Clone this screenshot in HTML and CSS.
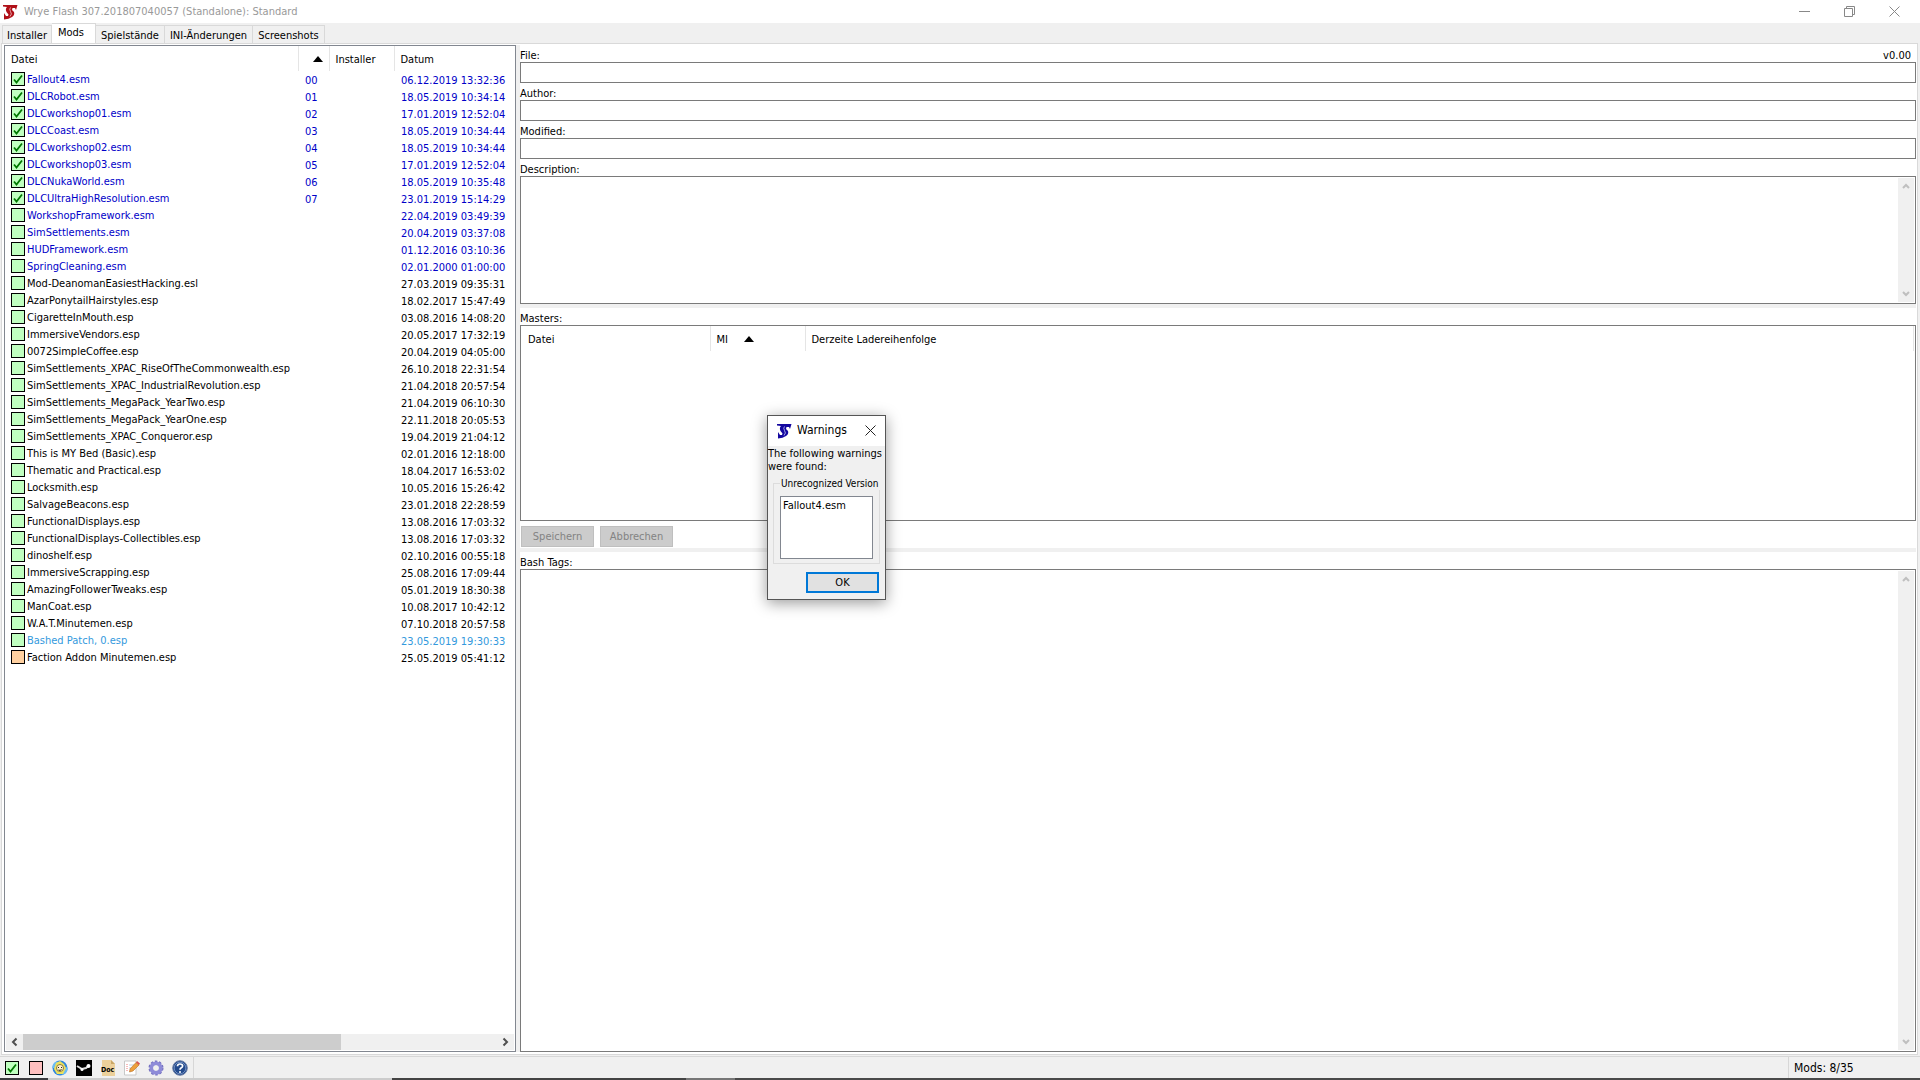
FILE: index.html
```html
<!DOCTYPE html>
<html lang="de">
<head>
  <meta charset="UTF-8" />
  <meta name="viewport" content="width=device-width, initial-scale=1.0"/>
  <title>Wrye Flash</title>
  <link rel="stylesheet" href="styles.css">
</head>
<body>
  <header class="titlebar">
    <svg class="logo" viewBox="0 0 15 16" width="15" height="16">
      <path fill="#b01018" d="M0 1 H14.500 L13 6 L12 4 L9.500 4 L9 6 L11 8 Q12 11 9 13 Q6 15 1 15.500 L1 9 L3 12 H5 L5.500 10.500 L3.500 8 Q2 5 4 3 L0 2.500 Z"/>
      <path fill="none" stroke="#f3c9c9" stroke-width=".8" d="M7.500 3.500 Q6 5 7.500 7.500 Q9.500 10 7 12.500"/>
    </svg>
    <h1>Wrye Flash 307.201807040057 (Standalone): Standard</h1>
    <div class="window-buttons">
      <button type="button" aria-label="Minimieren"><svg viewBox="0 0 11 11" width="11" height="11"><path d="M0 5.500 H11"/></svg></button>
      <button type="button" aria-label="Wiederherstellen"><svg viewBox="0 0 11 11" width="11" height="11"><path d="M.5 2.500 H8.500 V10.500 H.5 Z M2.500 2.500 V.5 H10.500 V8.500 H8.500"/></svg></button>
      <button type="button" aria-label="Schließen"><svg viewBox="0 0 11 11" width="11" height="11"><path d="M.5 .5 L10.500 10.500 M10.500 .5 L.5 10.500"/></svg></button>
    </div>
  </header>

  <nav class="tabs">
    <button type="button">Installer</button>
    <button type="button" class="active">Mods</button>
    <button type="button">Spielstände</button>
    <button type="button">INI-Änderungen</button>
    <button type="button">Screenshots</button>
  </nav>

  <main class="page">
    <section class="mod-list">
      <table class="mods">
        <thead>
          <tr>
            <th class="col-file">Datei</th>
            <th class="col-index" aria-label="Ladereihenfolge"><span class="sort"></span></th>
            <th class="col-installer">Installer</th>
            <th class="col-date">Datum</th>
          </tr>
        </thead>
        <tbody id="mods"></tbody>
      </table>
      <div class="hscroll">
        <svg viewBox="0 0 17 16" width="17" height="16"><path d="M10.500 4.500 L7 8 L10.500 11.500"/></svg>
        <div class="track"><div class="thumb"></div></div>
        <svg viewBox="0 0 17 16" width="17" height="16"><path d="M6.500 4.500 L10 8 L6.500 11.500"/></svg>
      </div>
    </section>

    <section class="details">
      <div class="label-row"><label for="file">File:</label><span>v0.00</span></div>
      <input type="text" id="file" />
      <label for="author">Author:</label>
      <input type="text" id="author" />
      <label for="modified">Modified:</label>
      <input type="text" id="modified" />
      <label for="description">Description:</label>
      <div class="box description">
        <textarea id="description"></textarea>
        <div class="vscroll">
          <svg viewBox="0 0 16 17" width="16" height="17"><path d="M5 10 L8 7 L11 10"/></svg>
          <svg viewBox="0 0 16 17" width="16" height="17"><path d="M5 7 L8 10 L11 7"/></svg>
        </div>
      </div>
      <div class="sash"></div>

      <h2>Masters:</h2>
      <div class="box masters">
        <table>
          <thead>
            <tr>
              <th class="col-master">Datei</th>
              <th class="col-mi">MI<span class="sort"></span></th>
              <th>Derzeite Ladereihenfolge</th>
            </tr>
          </thead>
        </table>
      </div>
      <div class="actions">
        <button type="button" disabled>Speichern</button>
        <button type="button" disabled>Abbrechen</button>
      </div>
      <div class="sash"></div>

      <label for="tags">Bash Tags:</label>
      <div class="box tags">
        <textarea id="tags"></textarea>
        <div class="vscroll">
          <svg viewBox="0 0 16 17" width="16" height="17"><path d="M5 10 L8 7 L11 10"/></svg>
          <svg viewBox="0 0 16 17" width="16" height="17"><path d="M5 7 L8 10 L11 7"/></svg>
        </div>
      </div>
    </section>
  </main>

  <footer class="statusbar">
    <div class="tools">
      <button type="button" aria-label="Auto-Quit">
        <svg viewBox="0 0 16 16" width="16" height="16"><rect x="1.500" y="1.500" width="13" height="13" fill="#c0ffc0" stroke="#000"/><path d="M4 8.500 L6.500 11.500 L12 4.500" fill="none" stroke="#007800" stroke-width="1.800"/></svg>
      </button>
      <button type="button" aria-label="OBSE">
        <svg viewBox="0 0 16 16" width="16" height="16"><rect x="1.500" y="1.500" width="13" height="13" fill="#ffc0c0" stroke="#000"/></svg>
      </button>
      <button type="button" aria-label="Fallout 4">
        <svg viewBox="0 0 16 16" width="16" height="16"><circle cx="8" cy="8" r="7.500" fill="#2f86dc"/><path d="M0 8 A8 8 0 0 1 5 1 L7 4 L3 8 Z M16 8 A8 8 0 0 1 11 15 L9 13 L14 7 Z" fill="#6cbcf4"/><path d="M8 1 L12 4 L14 8 L11 14 H5 L2 9 L4 3 Z" fill="#ece05c"/><circle cx="8" cy="8" r="3.500" fill="#fff3cc" stroke="#6b5a2a" stroke-width=".8"/><path d="M6.500 7 V8 M9.500 7 V8 M6.500 10 Q8 11 9.500 9.500" stroke="#222" fill="none"/></svg>
      </button>
      <button type="button" aria-label="Steam">
        <svg viewBox="0 0 16 16" width="16" height="16"><rect width="16" height="16" fill="#000"/><path d="M1 6 L6 9 L10 8 L13 5.500" fill="none" stroke="#ddd" stroke-width="2"/><circle cx="12.500" cy="6" r="2" fill="#fff"/><circle cx="6" cy="9.500" r="1.500" fill="#fff"/></svg>
      </button>
      <button type="button" aria-label="Doc Browser">
        <svg viewBox="0 0 16 16" width="16" height="16"><path d="M2 0 H11 L15 4 V16 H2 Z" fill="#ecd09a"/><path d="M11 0 V4 H15 Z" fill="#c9a766"/><text x="1" y="12" class="doc-text">Doc</text></svg>
      </button>
      <button type="button" aria-label="Mod Checker">
        <svg viewBox="0 0 16 16" width="16" height="16"><path d="M.5 1 H12 V15 H.5 Z" fill="#fff" stroke="#c8c8c8"/><path d="M3 4 V12" stroke="#e77" stroke-dasharray="1 1"/><path d="M5 5 H10 M5 8 H8" stroke="#bcd"/><path d="M6 9 L12 2.500 L15 5 L9 11 L5.500 12 Z" fill="#eda03c" stroke="#b86d22" stroke-width=".6"/><path d="M12 2.500 L13 1 L16 3.500 L15 5 Z" fill="#d9544d"/></svg>
      </button>
      <button type="button" aria-label="Einstellungen">
        <svg viewBox="0 0 16 16" width="16" height="16"><circle cx="8" cy="8" r="6.500" fill="none" stroke="#7470c0" stroke-width="2" stroke-dasharray="2.500 1.600"/><circle cx="8" cy="8" r="4.700" fill="none" stroke="#8e8bd8" stroke-width="3.800"/><circle cx="8" cy="8" r="2.500" fill="#f0f0f0"/></svg>
      </button>
      <button type="button" aria-label="Hilfe">
        <svg viewBox="0 0 16 16" width="16" height="16"><circle cx="8" cy="8" r="7.300" fill="#234a8c" stroke="#6b7ea4"/><circle cx="8" cy="8" r="5.800" fill="none" stroke="#8fa9d6" stroke-width=".7"/><path d="M5.500 6.300 Q5.500 4 8 4 Q10.600 4 10.600 6 Q10.600 7.200 9 8 Q8 8.600 8 9.800" fill="none" stroke="#fff" stroke-width="1.700"/><circle cx="8" cy="12" r="1" fill="#fff"/></svg>
      </button>
    </div>
    <div class="count">Mods: 8/35</div>
  </footer>
  <div class="taskbar"></div>

  <div class="dialog" role="dialog" aria-labelledby="dialog-title">
    <div class="dialog-title">
      <svg class="logo" viewBox="0 0 15 16" width="15" height="16">
        <path fill="#1408a0" d="M0 1 H14.500 L13 6 L12 4 L9.500 4 L9 6 L11 8 Q12 11 9 13 Q6 15 1 15.500 L1 9 L3 12 H5 L5.500 10.500 L3.500 8 Q2 5 4 3 L0 2.500 Z"/>
        <path fill="none" stroke="#c9c9f3" stroke-width=".8" d="M7.500 3.500 Q6 5 7.500 7.500 Q9.500 10 7 12.500"/>
      </svg>
      <span id="dialog-title">Warnings</span>
      <button type="button" aria-label="Schließen"><svg viewBox="0 0 11 11" width="11" height="11"><path d="M.5 .5 L10.500 10.500 M10.500 .5 L.5 10.500"/></svg></button>
    </div>
    <p>The following warnings were found:</p>
    <fieldset>
      <legend>Unrecognized Version</legend>
      <div class="warning-list">Fallout4.esm</div>
    </fieldset>
    <button type="button" class="ok">OK</button>
  </div>

  <script src="mods.js"></script>
</body>
</html>
```
FILE: styles.css
```css
* {
  box-sizing: border-box;
}
body {
  margin: 0;
  height: 100vh;
  display: flex;
  flex-direction: column;
  overflow: hidden;
  background: #f0f0f0;
  color: #000;
  font: 11px/13px "DejaVu Sans Condensed", "DejaVu Sans", sans-serif;
}
button, input, textarea {
  font: inherit;
  color: inherit;
  margin: 0;
  padding: 0;
  border: 0;
  border-radius: 0;
  background: none;
}
h1, h2, p {
  margin: 0;
  font-size: inherit;
  font-weight: normal;
}
svg {
  display: block;
}

/* title bar */
.titlebar {
  flex: none;
  display: flex;
  align-items: center;
  height: 23px;
  padding-left: 3px;
  background: #fff;
}
.titlebar h1 {
  flex: 1;
  margin-left: 6px;
  color: #999;
}
.window-buttons {
  display: flex;
  margin-right: 3px;
}
.window-buttons button {
  display: flex;
  align-items: center;
  justify-content: center;
  width: 45px;
  height: 20px;
}
.window-buttons path {
  fill: none;
  stroke: #888;
}

/* tabs */
.tabs {
  flex: none;
  display: flex;
  align-items: flex-end;
  height: 20px;
  padding-left: 2px;
}
.tabs button {
  height: 18px;
  padding: 1px 5px 0;
  border: 1px solid #d9d9d9;
  border-width: 1px 1px 0 0;
  white-space: nowrap;
}
.tabs button:first-child {
  padding: 1px 4px 0;
  border-left-width: 1px;
}
.tabs .active {
  height: 20px;
  padding: 0 11px 2px 6px;
  background: #fff;
}

.page {
  flex: 1;
  min-height: 0;
  display: flex;
  margin: 0 2px 0 1px;
  padding: 1px 1px 2px 2px;
  border: 1px solid #d9d9d9;
  background: #fff;
}

/* mod list */
.mod-list {
  flex: none;
  display: flex;
  flex-direction: column;
  justify-content: space-between;
  width: 512px;
  border: 1px solid #828790;
}
table {
  width: 100%;
  table-layout: fixed;
  border-collapse: collapse;
}
th, td {
  padding: 0;
  text-align: left;
  font-weight: normal;
  white-space: nowrap;
}
th {
  height: 25px;
  padding: 2px 0 0 6px;
  border-right: 1px solid #e5e5e5;
}
.mods th:last-child {
  border-right: 0;
}
.mods td {
  height: 17px;
  padding: 1px 0 0 7px;
}
.mods td:first-child {
  padding: 0 0 0 6px;
}
.mods .col-file {
  width: 293px;
}
.col-index {
  width: 31px;
}
.col-installer {
  width: 65px;
}
.sort {
  display: inline-block;
  border: 5px solid transparent;
  border-top: 0;
  border-bottom: 6px solid #000;
  vertical-align: 1px;
}
.col-index .sort {
  margin-left: 8px;
}
.mods label {
  display: flex;
  gap: 2px;
  height: 17px;
  line-height: 18px;
}
.mods input {
  appearance: none;
  flex: none;
  width: 14px;
  height: 14px;
  margin-top: 1px;
  border: 1px solid #000;
  background: #c0ffc0;
}
.mods input:checked {
  background: #c0ffc0 url("data:image/svg+xml,%3Csvg xmlns='http://www.w3.org/2000/svg' viewBox='0 0 12 12'%3E%3Cpath d='M2 6.500L4.500 9.500L10 2.500' fill='none' stroke='%23007800' stroke-width='1.800'/%3E%3C/svg%3E");
}
.master {
  color: #0000c8;
}
.patch {
  color: #3399dd;
}
.mods .unmerged input {
  background: #ffd0a0;
}
.hscroll {
  display: flex;
  height: 16px;
  margin: 0 1px 1px;
  background: #f0f0f0;
}
.hscroll .track {
  flex: 1;
}
.hscroll .thumb {
  width: 67%;
  height: 100%;
  background: #cdcdcd;
}
.hscroll path {
  fill: none;
  stroke: #505050;
  stroke-width: 2;
}

/* details pane */
.details {
  flex: 1;
  display: flex;
  flex-direction: column;
  min-width: 0;
  padding-top: 4px;
  border-left: 4px solid #f0f0f0;
}
.label-row {
  display: flex;
  justify-content: space-between;
  padding-right: 5px;
}
.details input {
  height: 21px;
  margin-bottom: 4px;
}
.details input, .box {
  border: 1px solid #7a7a7a;
}
.box {
  display: flex;
}
.box textarea {
  flex: 1;
  resize: none;
  outline: 0;
}
.description {
  height: 128px;
}
.masters {
  height: 196px;
  align-items: flex-start;
  padding: 0 1px;
}
.col-master {
  width: 188px;
}
.col-mi {
  width: 95px;
}
.col-mi .sort {
  margin-left: 16px;
}
.tags {
  flex: 1;
}
.vscroll {
  display: flex;
  flex-direction: column;
  justify-content: space-between;
  margin: 1px;
  background: #f0f0f0;
}
.vscroll path {
  fill: none;
  stroke: #bfbfbf;
  stroke-width: 2;
}
.sash {
  height: 4px;
  margin-bottom: 4px;
  background: #f0f0f0;
}
.actions {
  display: flex;
  gap: 6px;
  padding: 5px 1px 1px;
}
.actions button {
  width: 73px;
  height: 21px;
  border: 1px solid #bfbfbf;
  background: #ccc;
  color: #838383;
}

/* status bar */
.statusbar {
  flex: none;
  display: flex;
  justify-content: space-between;
  height: 22px;
  margin-top: 1px;
  border-top: 1px solid #d7d7d7;
}
.tools {
  display: flex;
  align-items: center;
  gap: 8px;
  padding: 0 5px 0 4px;
  border-right: 1px solid #d7d7d7;
}
.doc-text {
  font-size: 7px;
  font-weight: bold;
}
.count {
  width: 132px;
  padding: 5px 0 0 5px;
  border-left: 1px solid #d7d7d7;
  font-size: 12px;
}
.taskbar {
  flex: none;
  height: 2px;
  background: linear-gradient(to right, #3c3c40 48px, #ccc 48px 392px, #444 392px 686px, #777 686px 735px, #4a4a4a 735px);
}

/* warning dialog */
.dialog {
  position: absolute;
  left: 767px;
  top: 415px;
  width: 119px;
  border: 1px solid #555;
  background: #f0f0f0;
  box-shadow: 0 3px 14px rgba(0,0,0,0.4);
}
.dialog-title {
  display: flex;
  align-items: center;
  height: 30px;
  padding: 0 9px 1px;
  background: #fff;
  font-size: 12px;
}
.dialog-title span {
  flex: 1;
  margin-left: 5px;
}
.dialog-title button path {
  fill: none;
  stroke: #222;
}
.dialog p {
  padding-top: 1px;
}
.dialog fieldset {
  min-width: 0;
  margin: 4px 5px 0;
  padding: 6px 6px 4px;
  border: 1px solid #dcdcdc;
}
.dialog legend {
  padding: 0 1px;
  font-size: 10px;
  white-space: nowrap;
}
.warning-list {
  height: 63px;
  padding: 2px;
  border: 1px solid #828790;
  background: #fff;
}
.ok {
  display: block;
  width: 73px;
  height: 21px;
  margin: 8px 6px 6px auto;
  border: 2px solid #0078d7;
  background: #e1e1e1;
}
```
FILE: mods.js
```js
const mods = [
  ["Fallout4.esm", "06.12.2019 13:32:36", "master", "00"],
  ["DLCRobot.esm", "18.05.2019 10:34:14", "master", "01"],
  ["DLCworkshop01.esm", "17.01.2019 12:52:04", "master", "02"],
  ["DLCCoast.esm", "18.05.2019 10:34:44", "master", "03"],
  ["DLCworkshop02.esm", "18.05.2019 10:34:44", "master", "04"],
  ["DLCworkshop03.esm", "17.01.2019 12:52:04", "master", "05"],
  ["DLCNukaWorld.esm", "18.05.2019 10:35:48", "master", "06"],
  ["DLCUltraHighResolution.esm", "23.01.2019 15:14:29", "master", "07"],
  ["WorkshopFramework.esm", "22.04.2019 03:49:39", "master"],
  ["SimSettlements.esm", "20.04.2019 03:37:08", "master"],
  ["HUDFramework.esm", "01.12.2016 03:10:36", "master"],
  ["SpringCleaning.esm", "02.01.2000 01:00:00", "master"],
  ["Mod-DeanomanEasiestHacking.esl", "27.03.2019 09:35:31"],
  ["AzarPonytailHairstyles.esp", "18.02.2017 15:47:49"],
  ["CigaretteInMouth.esp", "03.08.2016 14:08:20"],
  ["ImmersiveVendors.esp", "20.05.2017 17:32:19"],
  ["0072SimpleCoffee.esp", "20.04.2019 04:05:00"],
  ["SimSettlements_XPAC_RiseOfTheCommonwealth.esp", "26.10.2018 22:31:54"],
  ["SimSettlements_XPAC_IndustrialRevolution.esp", "21.04.2018 20:57:54"],
  ["SimSettlements_MegaPack_YearTwo.esp", "21.04.2019 06:10:30"],
  ["SimSettlements_MegaPack_YearOne.esp", "22.11.2018 20:05:53"],
  ["SimSettlements_XPAC_Conqueror.esp", "19.04.2019 21:04:12"],
  ["This is MY Bed (Basic).esp", "02.01.2016 12:18:00"],
  ["Thematic and Practical.esp", "18.04.2017 16:53:02"],
  ["Locksmith.esp", "10.05.2016 15:26:42"],
  ["SalvageBeacons.esp", "23.01.2018 22:28:59"],
  ["FunctionalDisplays.esp", "13.08.2016 17:03:32"],
  ["FunctionalDisplays-Collectibles.esp", "13.08.2016 17:03:32"],
  ["dinoshelf.esp", "02.10.2016 00:55:18"],
  ["ImmersiveScrapping.esp", "25.08.2016 17:09:44"],
  ["AmazingFollowerTweaks.esp", "05.01.2019 18:30:38"],
  ["ManCoat.esp", "10.08.2017 10:42:12"],
  ["W.A.T.Minutemen.esp", "07.10.2018 20:57:58"],
  ["Bashed Patch, 0.esp", "23.05.2019 19:30:33", "patch"],
  ["Faction Addon Minutemen.esp", "25.05.2019 05:41:12", "unmerged"]
];

const body = document.getElementById("mods");

mods.forEach(([name, date, type, index]) => {
  const row = body.insertRow();
  row.className = type || "";
  row.innerHTML = `
    <td><label><input type="checkbox" ${index ? "checked" : ""}>${name}</label></td>
    <td>${index || ""}</td>
    <td></td>
    <td>${date}</td>`;
});
```
